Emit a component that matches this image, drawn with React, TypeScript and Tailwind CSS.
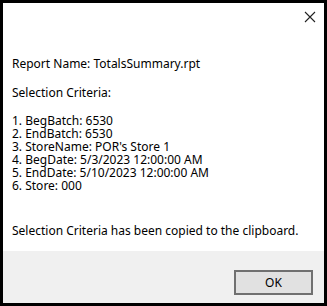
export default function App() {
    const lines = [
        "1. BegBatch: 6530",
        "2. EndBatch: 6530",
        "3. StoreName: POR's Store 1",
        "4. BegDate: 5/3/2023 12:00:00 AM",
        "5. EndDate: 5/10/2023 12:00:00 AM",
        "6. Store: 000",
    ];

    return (
        <div className="w-[327px] h-[306px] bg-black pt-[3px] pl-[3px] pr-[3px] pb-[3px]">
            <div
                className="flex h-full flex-col bg-white text-[12px] leading-[13px] text-black"
                style={{ fontFamily: '"Noto Sans", "Open Sans", sans-serif' }}
            >
                {/* Title bar */}
                <div className="flex h-[28px] items-center justify-end pr-[8px]">
                    <svg width="12" height="12" viewBox="0 0 12 12" className="text-[#222]">
                        <path d="M1 1 L11 11 M11 1 L1 11" stroke="currentColor" strokeWidth="1.1" fill="none" />
                    </svg>
                </div>

                {/* Message */}
                <div className="flex-1 pl-[9px] pt-[26px]">
                    <p>Report Name: TotalsSummary.rpt</p>
                    <p className="mt-[16px]">Selection Criteria:</p>
                    <div className="mt-[15px]">
                        {lines.map((line) => (
                            <p key={line}>{line}</p>
                        ))}
                    </div>
                    <p className="mt-[32px]">Selection Criteria has been copied to the clipboard.</p>
                </div>

                {/* Button row */}
                <div className="flex h-[52px] items-start justify-end bg-[#f0f0f0] pt-[19px] pr-[11px]">
                    <button className="h-[25px] w-[79px] border-2 border-[#707070] bg-[#e1e1e1] text-[12px] text-black">
                        OK
                    </button>
                </div>
            </div>
        </div>
    );
}
